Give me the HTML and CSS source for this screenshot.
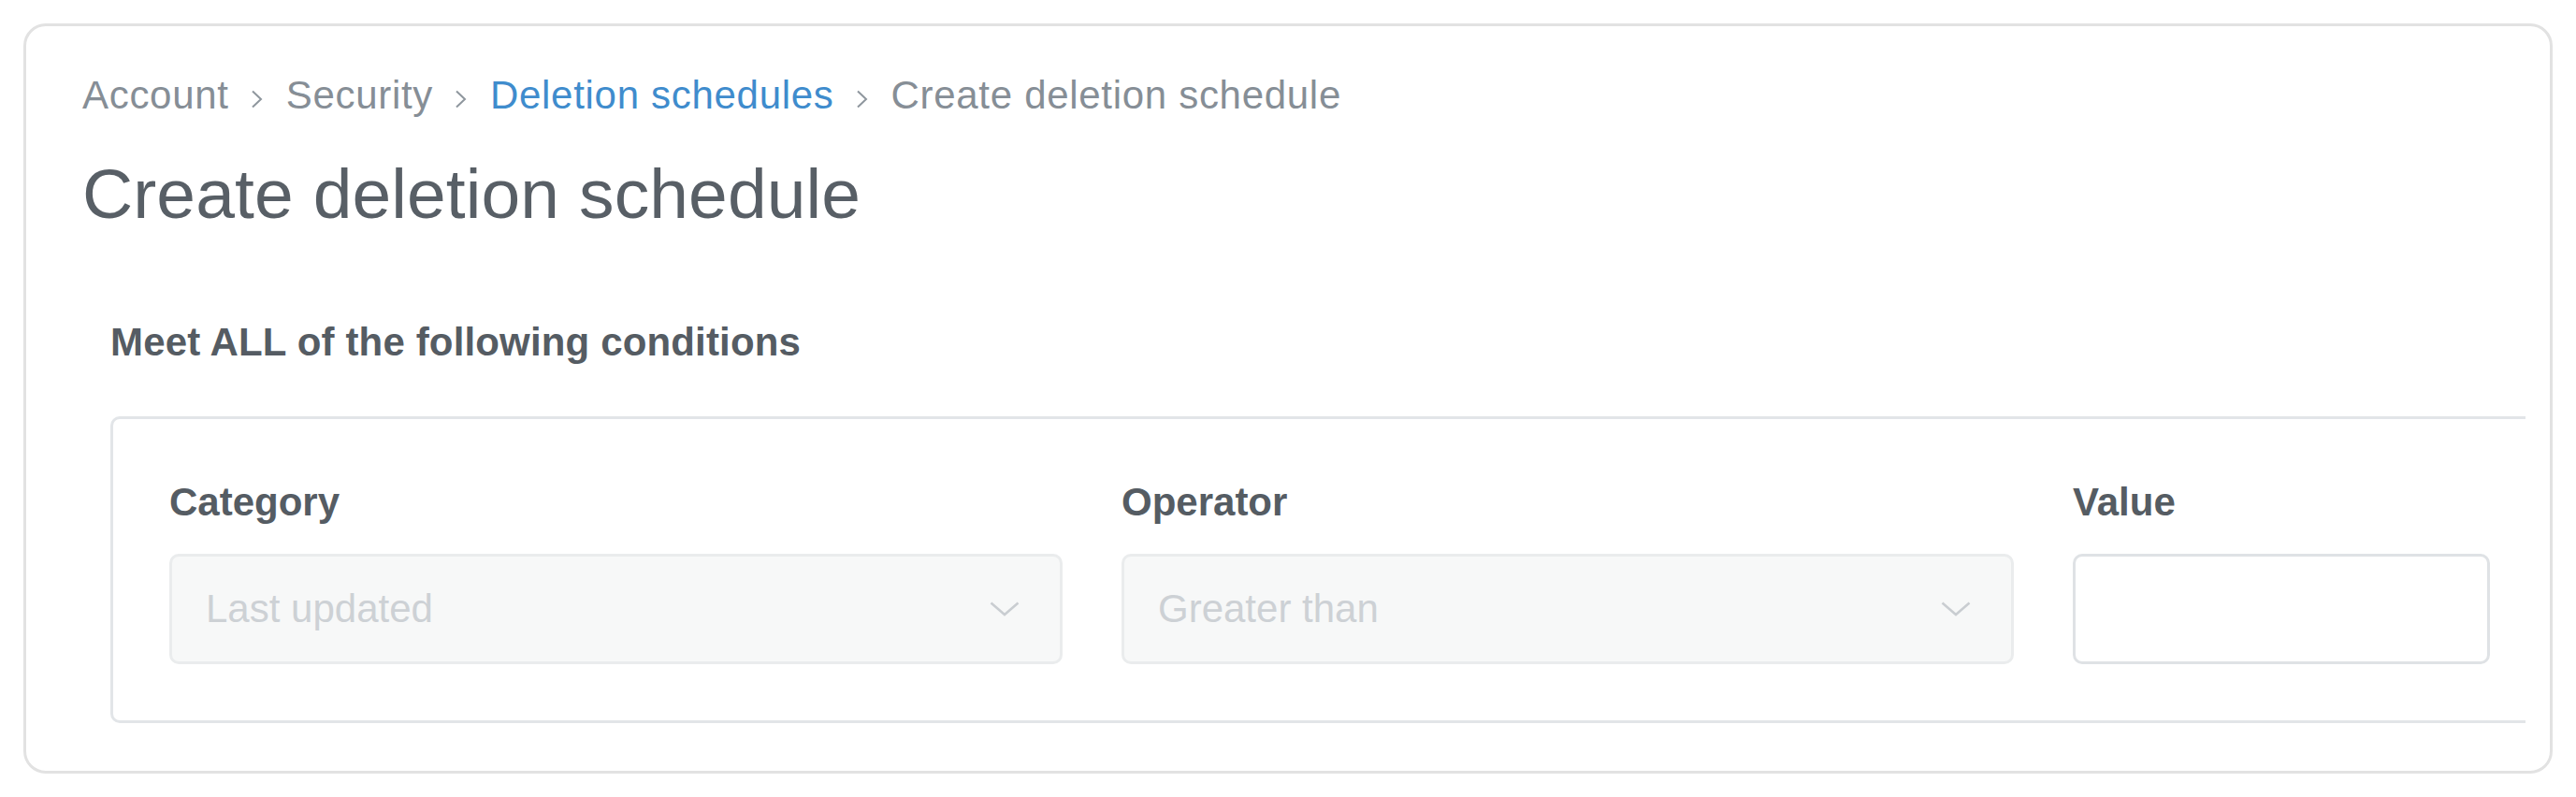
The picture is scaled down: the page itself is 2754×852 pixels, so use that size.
FILE: index.html
```html
<!DOCTYPE html>
<html lang="en">
<head>
<meta charset="utf-8">
<title>Create deletion schedule</title>
<link rel="stylesheet" href="styles.css">
</head>
<body>
<div class="page">
  <div class="card">
    <nav class="breadcrumb">
      <span class="crumb">Account</span>
      <svg class="sep" width="13" height="20" viewBox="0 0 13 20"><polyline points="2,1.5 11,10 2,18.5" fill="none" stroke="#8e969d" stroke-width="2"/></svg>
      <span class="crumb">Security</span>
      <svg class="sep" width="13" height="20" viewBox="0 0 13 20"><polyline points="2,1.5 11,10 2,18.5" fill="none" stroke="#8e969d" stroke-width="2"/></svg>
      <a class="crumb link" href="#">Deletion schedules</a>
      <svg class="sep" width="13" height="20" viewBox="0 0 13 20"><polyline points="2,1.5 11,10 2,18.5" fill="none" stroke="#8e969d" stroke-width="2"/></svg>
      <span class="crumb">Create deletion schedule</span>
    </nav>
    <h1 class="title">Create deletion schedule</h1>
    <section class="conditions">
      <h2 class="conditions-title">Meet ALL of the following conditions</h2>
      <div class="conditions-clip">
        <div class="condition-box">
          <div class="field field-category">
            <div class="label">Category</div>
            <div class="select">
              <span class="select-text">Last updated</span>
              <svg class="chev" width="32" height="16" viewBox="0 0 32 16"><polyline points="1.5,1.5 16,14 30.5,1.5" fill="none" stroke="#c9cdd1" stroke-width="2.5"/></svg>
            </div>
          </div>
          <div class="field field-operator">
            <div class="label">Operator</div>
            <div class="select">
              <span class="select-text">Greater than</span>
              <svg class="chev" width="32" height="16" viewBox="0 0 32 16"><polyline points="1.5,1.5 16,14 30.5,1.5" fill="none" stroke="#c9cdd1" stroke-width="2.5"/></svg>
            </div>
          </div>
          <div class="field field-value">
            <div class="label">Value</div>
            <div class="input"></div>
          </div>
        </div>
      </div>
    </section>
  </div>
</div>
</body>
</html>
```
FILE: styles.css
```css
* { box-sizing: border-box; }
html, body { margin: 0; padding: 0; background: #ffffff; }
body {
  font-family: "Liberation Sans", Arial, Helvetica, sans-serif;
  color: #5a6168;
}
.page {
  padding: 25px;
  height: 852px;
}
.card {
  width: 2704px;
  height: 802px;
  border: 3px solid #e2e2e2;
  border-radius: 24px;
  padding: 49px 26px 0 60px;
  background: #fff;
}
.breadcrumb {
  display: flex;
  align-items: center;
  height: 50px;
  font-size: 42px;
  line-height: 50px;
  color: #868e96;
  white-space: nowrap;
  letter-spacing: 0.7px;
}
.crumb { color: #868e96; text-decoration: none; }
.crumb.link { color: #3f8ccd; }
.sep { margin: 8px 25px 0 23px; flex-shrink: 0; }
.title {
  margin: 35px 0 0 0;
  font-size: 75px;
  line-height: 90px;
  font-weight: 400;
  color: #585f66;
  letter-spacing: 0.1px;
}
.conditions { margin: 89px 0 0 30px; }
.conditions-title {
  margin: 0;
  font-size: 42px;
  line-height: 50px;
  font-weight: 700;
  color: #555c63;
  letter-spacing: 0.15px;
}
.conditions-clip {
  margin-top: 54px;
  overflow: hidden;
}
.condition-box {
  width: 2720px;
  border: 3px solid #e2e5e8;
  border-radius: 10px;
  padding: 64px 0 60px 60px;
  display: flex;
  column-gap: 63px;
}
.field { display: flex; flex-direction: column; }
.field-category { width: 955px; }
.field-operator { width: 954px; }
.field-value { width: 446px; }
.label {
  font-size: 42px;
  line-height: 50px;
  font-weight: 700;
  color: #555c63;
  margin-bottom: 30px;
}
.select {
  height: 118px;
  border: 3px solid #eaeced;
  border-radius: 10px;
  background: #f7f8f8;
  display: flex;
  align-items: center;
  justify-content: space-between;
  padding: 0 43px 0 36px;
}
.select-text {
  font-size: 42px;
  color: #cdd1d5;
}
.input {
  height: 118px;
  border: 3px solid #dfe2e5;
  border-radius: 10px;
  background: #fff;
}
```
